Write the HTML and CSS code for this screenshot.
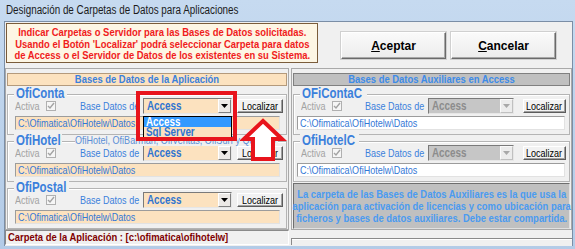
FILE: index.html
```html
<!DOCTYPE html>
<html lang="es">
<head>
  <meta charset="UTF-8" />
  <title>Designación de Carpetas de Datos para Aplicaciones</title>
  <link rel="stylesheet" href="styles.css">
</head>
<body>

<div class="window">
  <div class="titlebar"><span class="sq">Designación de Carpetas de Datos para Aplicaciones</span></div>

  <div class="client">
    <div class="top">
      <div class="notice">
        <span class="sq sq--c">Indicar Carpetas o Servidor para las Bases de Datos solicitadas.<br>Usando el Botón 'Localizar' podrá seleccionar Carpeta para datos<br>de Access o el Servidor de Datos de los existentes en su Sistema.</span>
      </div>
      <div class="actions">
        <button class="btn"><u>A</u>ceptar</button>
        <button class="btn"><u>C</u>ancelar</button>
      </div>
    </div>

    <div class="columns">
      <!-- Bases de la aplicación -->
      <div class="col col--app">
        <div class="col-head"><span class="sq sq--c">Bases de Datos de la Aplicación</span></div>

        <div class="group">
          <span class="legend"><span class="sq">OfiConta</span></span>
          <div class="row">
            <span class="activa"><span class="sq">Activa</span><span class="check"><svg width="8" height="8" viewBox="0 0 8 8"><path d="M1 4 L3 6 L7 1" fill="none" stroke="#a3a3a3" stroke-width="1.4"/></svg></span></span>
            <span class="bd-label"><span class="sq">Base Datos de</span></span>
            <span class="combo"><span class="combo-value"><span class="sq">Access</span></span><span class="combo-btn"><svg width="7" height="4" viewBox="0 0 7 4"><path d="M0 0 H7 L3.5 4 Z" fill="#000"/></svg></span></span>
            <button class="loc"><span class="sq sq--c">Localizar</span></button>
          </div>
          <div class="path"><span class="sq">C:\Ofimatica\OfiHotelw\Datos</span></div>
        </div>

        <div class="group">
          <span class="legend"><span class="sq">OfiHotel</span></span>
          <span class="legend-note"><span class="sq">OfiHotel, OfiBarman, OfiVentas, OfiSurf y Quiosco</span></span>
          <div class="row">
            <span class="activa"><span class="sq">Activa</span><span class="check"><svg width="8" height="8" viewBox="0 0 8 8"><path d="M1 4 L3 6 L7 1" fill="none" stroke="#a3a3a3" stroke-width="1.4"/></svg></span></span>
            <span class="bd-label"><span class="sq">Base Datos de</span></span>
            <span class="combo"><span class="combo-value"><span class="sq">Access</span></span><span class="combo-btn"><svg width="7" height="4" viewBox="0 0 7 4"><path d="M0 0 H7 L3.5 4 Z" fill="#000"/></svg></span></span>
            <button class="loc"><span class="sq sq--c">Localizar</span></button>
          </div>
          <div class="path"><span class="sq">C:\Ofimatica\OfiHotelw\Datos</span></div>
        </div>

        <div class="group">
          <span class="legend"><span class="sq">OfiPostal</span></span>
          <div class="row">
            <span class="activa"><span class="sq">Activa</span><span class="check"><svg width="8" height="8" viewBox="0 0 8 8"><path d="M1 4 L3 6 L7 1" fill="none" stroke="#a3a3a3" stroke-width="1.4"/></svg></span></span>
            <span class="bd-label"><span class="sq">Base Datos de</span></span>
            <span class="combo"><span class="combo-value"><span class="sq">Access</span></span><span class="combo-btn"><svg width="7" height="4" viewBox="0 0 7 4"><path d="M0 0 H7 L3.5 4 Z" fill="#000"/></svg></span></span>
            <button class="loc"><span class="sq sq--c">Localizar</span></button>
          </div>
          <div class="path"><span class="sq">C:\Ofimatica\OfiHotelw\Datos</span></div>
        </div>
      </div>

      <!-- Bases auxiliares -->
      <div class="col col--aux">
        <div class="col-head col-head--gray"><span class="sq sq--c">Bases de Datos Auxiliares en Access</span></div>

        <div class="group">
          <span class="legend"><span class="sq">OFiContaC</span></span>
          <div class="row">
            <span class="activa"><span class="sq">Activa</span><span class="check"><svg width="8" height="8" viewBox="0 0 8 8"><path d="M1 4 L3 6 L7 1" fill="none" stroke="#a3a3a3" stroke-width="1.4"/></svg></span></span>
            <span class="bd-label"><span class="sq">Base Datos de</span></span>
            <span class="combo combo--off"><span class="combo-value"><span class="sq">Access</span></span><span class="combo-btn"><svg width="7" height="4" viewBox="0 0 7 4"><path d="M0 0 H7 L3.5 4 Z" fill="#a8a8a8"/></svg></span></span>
            <button class="loc"><span class="sq sq--c">Localizar</span></button>
          </div>
          <div class="path path--white"><span class="sq">C:\Ofimatica\OfiHotelw\Datos</span></div>
        </div>

        <div class="group">
          <span class="legend"><span class="sq">OfiHotelC</span></span>
          <div class="row">
            <span class="activa"><span class="sq">Activa</span><span class="check"><svg width="8" height="8" viewBox="0 0 8 8"><path d="M1 4 L3 6 L7 1" fill="none" stroke="#a3a3a3" stroke-width="1.4"/></svg></span></span>
            <span class="bd-label"><span class="sq">Base Datos de</span></span>
            <span class="combo combo--off"><span class="combo-value"><span class="sq">Access</span></span><span class="combo-btn"><svg width="7" height="4" viewBox="0 0 7 4"><path d="M0 0 H7 L3.5 4 Z" fill="#a8a8a8"/></svg></span></span>
            <button class="loc"><span class="sq sq--c">Localizar</span></button>
          </div>
          <div class="path path--white"><span class="sq">C:\Ofimatica\OfiHotelw\Datos</span></div>
        </div>

        <div class="info">
          <span class="sq sq--c">La carpeta de las Bases de Datos Auxiliares es la que usa la<br>aplicación para activación de licencias y como ubicación para<br>ficheros y bases de datos auxiliares. Debe estar compartida.</span>
        </div>
      </div>
    </div>

    <div class="statusbar">
      <div class="status-main"><span class="sq">Carpeta de la Aplicación : [c:\ofimatica\ofihotelw]</span></div>
      <div class="status-side"></div>
    </div>

    <!-- open list of the first combo, and the red marks drawn over it -->
    <div class="droplist">
      <div class="drop-item drop-item--sel"><span class="sq">Access</span></div>
      <div class="drop-item"><span class="sq">Sql Server</span></div>
    </div>
    <div class="mark-box"></div>
    <svg class="mark-arrow" width="48" height="46" viewBox="0 0 48 46">
      <polygon points="23,4 42,22 33,22 33,42 13,42 13,22 4,22" fill="#fff" stroke="#e8141c" stroke-width="4"/>
    </svg>
  </div>
</div>

</body>
</html>
```

FILE: styles.css
```css
body {
  margin: 0;
  width: 575px;
  height: 249px;
  overflow: hidden;
  font-family: "Liberation Sans", Arial, sans-serif;
}

/* the dialog uses a narrow face: squeeze Liberation Sans to Arial Narrow widths */
.sq {
  display: inline-block;
  flex-shrink: 0;
  white-space: nowrap;
  transform: scaleX(0.82);
  transform-origin: 0 50%;
}

.sq--c {
  text-align: center;
  transform-origin: 50% 50%;
}

.window {
  width: 575px;
  height: 249px;
  background: linear-gradient(to bottom, #c6daf0, #b3cbe7);
}

.titlebar {
  height: 21px;
  padding-left: 6px;
  line-height: 20px;
  font-size: 12px;
  color: #1b1b1b;
}

.client {
  position: relative;
  margin-left: 4px;
  width: 567px;
  height: 224px;
  border: 1px solid #7b8ea6;
  border-bottom: none;
  background: #f0f0f0;
}

/* top: notice + buttons */
.top {
  display: flex;
  height: 46px;
  box-sizing: border-box;
  padding: 1px 0 0 1px;
}

.notice {
  display: flex;
  justify-content: center;
  width: 312px;
  height: 40px;
  box-sizing: border-box;
  padding-top: 3px;
  border: 1px solid #7a5c3a;
  background: #fdf6e4;
  color: #f01c1c;
  font-weight: bold;
  font-size: 11.5px;
  line-height: 11.5px;
}

.actions {
  display: flex;
  gap: 5px;
  margin: 9px 0 0 23px;
}

.btn {
  width: 105px;
  height: 27px;
  padding: 0;
  font-family: "Liberation Sans", Arial, sans-serif;
  font-weight: bold;
  font-size: 12px;
  color: #000;
  background: linear-gradient(to bottom, #fafafa, #ececec);
  border: 1px solid;
  border-color: #fff #6a6a6a #6a6a6a #fff;
  box-shadow: inset -1px -1px #a8a8a8, 0 0 0 1px #d0d0d0;
}

/* columns */
.columns {
  display: flex;
  gap: 2px;
}

.col {
  height: 162px;
  box-sizing: border-box;
  padding: 4px 1px 0 1px;
  border: 1px solid #a9a9a9;
}

.col--app { width: 284px; }
.col--aux { width: 281px; }

.col-head {
  display: flex;
  justify-content: center;
  height: 13px;
  box-sizing: border-box;
  border: 1px solid #b49a7c;
  background: #fce2bf;
  color: #3b80dc;
  font-weight: bold;
  font-size: 11.5px;
  line-height: 11px;
}

.col-head--gray {
  border-color: #808080;
  background: #c0c0c0;
  color: #3d8be8;
}

.group {
  position: relative;
  height: 41px;
  box-sizing: border-box;
  margin-top: 6px;
  padding: 3px 3px 0 7px;
  border: 1px solid #b4b4b4;
  box-shadow: inset 1px 1px #fff;
}

.col-head + .group { margin-top: 8px; }

.legend {
  position: absolute;
  left: 6px;
  top: -8px;
  padding: 0 2px;
  background: #f0f0f0;
  color: #3b80dc;
  font-weight: bold;
  font-size: 14px;
  line-height: 13px;
}

.legend .sq { margin-right: -10px; }

.legend-note {
  position: absolute;
  left: 67px;
  top: -7px;
  background: #f0f0f0;
  color: #5b8fd6;
  font-size: 11px;
  line-height: 11px;
}

.legend-note .sq { margin-right: -42px; }

.row {
  display: flex;
  align-items: center;
  height: 16px;
}

.activa {
  display: flex;
  align-items: center;
  width: 65px;
  color: #a3a3a3;
  font-size: 11px;
}

.check {
  display: flex;
  align-items: center;
  justify-content: center;
  width: 10px;
  height: 10px;
  box-sizing: border-box;
  margin-left: 1px;
  border: 1px solid #b0b0b0;
  background: #f6f6f6;
}

.bd-label {
  width: 63px;
  color: #3b80dc;
  font-size: 11px;
}

.combo {
  display: flex;
  width: 89px;
  height: 16px;
  box-sizing: border-box;
  border: 1px solid;
  border-color: #7a7a7a #e6e6e6 #e6e6e6 #7a7a7a;
  background: #fce2bf;
}

.combo-value {
  flex: 1;
  padding-left: 3px;
  color: #2f74d0;
  font-weight: bold;
  font-size: 12px;
  line-height: 14px;
}

.combo-btn {
  display: flex;
  align-items: center;
  justify-content: center;
  width: 13px;
  box-sizing: border-box;
  border: 1px solid;
  border-color: #fff #808080 #808080 #fff;
  background: #ece9e6;
}

.combo--off {
  width: 88px;
  background: #c6c6c6;
}

.combo--off .combo-value { color: #8c8c8c; }
.combo--off .combo-btn { background: #ececec; border-color: #fafafa #c0c0c0 #c0c0c0 #fafafa; }

.loc {
  display: flex;
  align-items: center;
  justify-content: center;
  width: 46px;
  height: 14px;
  margin-left: 5px;
  padding: 0;
  font-family: inherit;
  font-size: 11px;
  line-height: 11px;
  color: #000;
  background: #f2f2f2;
  border: 1px solid;
  border-color: #fff #5c5c5c #5c5c5c #fff;
  box-shadow: inset -1px -1px #a0a0a0;
}

.col--aux .loc {
  width: 43px;
  margin-left: 9px;
}

.path {
  width: 265px;
  height: 14px;
  box-sizing: border-box;
  margin-top: 2px;
  padding-left: 2px;
  border: 1px solid;
  border-color: #9c9c9c #e2e2e2 #e2e2e2 #9c9c9c;
  background: #fce2bf;
  color: #3478d6;
  font-size: 11px;
  line-height: 12px;
}

.path--white {
  width: 268px;
  margin-left: -4px;
  background: #fff;
}

.info {
  display: flex;
  justify-content: center;
  height: 46px;
  box-sizing: border-box;
  margin-top: 1px;
  padding-top: 4px;
  border: 1px solid;
  border-color: #6e6e6e #e0e0e0 #e0e0e0 #6e6e6e;
  background: #c0c0c0;
  color: #4b9bf0;
  font-weight: bold;
  font-size: 11.5px;
  line-height: 12px;
}

/* status bar */
.statusbar {
  display: flex;
  gap: 2px;
}

.status-main {
  width: 284px;
  height: 15px;
  box-sizing: border-box;
  padding-left: 2px;
  border: 1px solid;
  border-color: #8a8a8a #fff #fff #8a8a8a;
  color: #800000;
  font-weight: bold;
  font-size: 11.5px;
  line-height: 13px;
  white-space: nowrap;
}

.status-side {
  flex: 1;
  margin-top: 8px;
  border-top: 1px solid #8a8a8a;
  border-left: 1px solid #8a8a8a;
  box-shadow: inset 0 1px #fff;
}

/* open dropdown and red annotations */
.droplist {
  position: absolute;
  left: 138px;
  top: 94px;
  width: 89px;
  box-sizing: border-box;
  border: 1px solid #000;
  background: #fce2bf;
}

.drop-item {
  height: 10px;
  padding-left: 2px;
  color: #2f74d0;
  font-weight: bold;
  font-size: 12px;
  line-height: 10px;
}

.drop-item--sel {
  background: #3399ff;
  color: #fff;
}

.mark-box {
  position: absolute;
  left: 131px;
  top: 69px;
  width: 101px;
  height: 50px;
  box-sizing: border-box;
  border: 4px solid #e8141c;
}

.mark-arrow {
  position: absolute;
  left: 235px;
  top: 95px;
}
```
